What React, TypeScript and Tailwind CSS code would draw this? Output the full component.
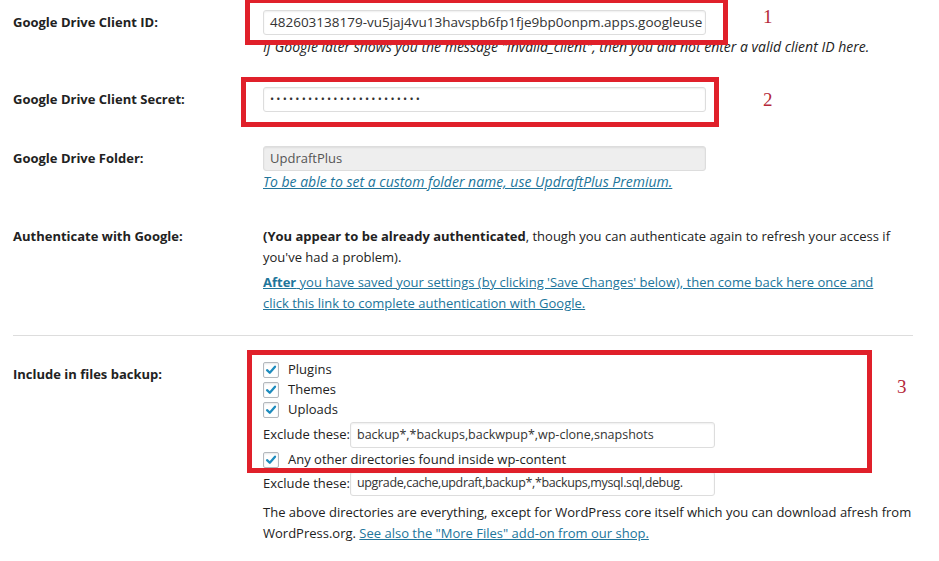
import React from "react";

const font = { fontFamily: '"Open Sans", "Liberation Sans", sans-serif' };

function Check({ label }: { label: string }) {
  return (
    <label className="flex items-center h-[20px] gap-[9px]">
      <span className="w-[16px] h-[16px] border border-[#b4b9be] rounded-[2px] bg-white shadow-[inset_0_1px_2px_rgba(0,0,0,0.1)] flex items-center justify-center">
        <svg viewBox="0 0 16 16" className="w-[14px] h-[14px]">
          <path d="M3.5 8.2 L6.6 11.2 L12.6 4.2" fill="none" stroke="#1e8cbe" strokeWidth="2.6" strokeLinecap="round" strokeLinejoin="round" />
        </svg>
      </span>
      <span>{label}</span>
    </label>
  );
}

function TextInput({ value, disabled, className }: { value: string; disabled?: boolean; className?: string }) {
  return (
    <div
      className={
        "border border-[#ddd] rounded-[3px] shadow-[inset_0_1px_2px_rgba(0,0,0,0.07)] px-[6px] flex items-center overflow-hidden whitespace-nowrap text-[#333] " +
        (disabled ? "bg-[#eeeeee] " : "bg-white ") +
        (className || "")
      }
    >
      {value}
    </div>
  );
}

export default function App() {
  return (
    <div className="relative w-[939px] h-[561px] bg-white text-[13px] text-[#222] overflow-hidden" style={font}>
      <div className="pl-[13px]">
        {/* Client ID */}
        <div className="flex mt-[10px]">
          <div className="w-[250px] h-[25px] flex items-center font-bold">Google Drive Client ID:</div>
          <div>
            <TextInput value="482603138179-vu5jaj4vu13havspb6fp1fje9bp0onpm.apps.googleuse" className="w-[443px] h-[25px] text-[13.5px]" />
            <p className="mt-[3px] leading-[18px] italic text-[14px] whitespace-nowrap">
              If Google later shows you the message "invalid_client", then you did not enter a valid client ID here.
            </p>
          </div>
        </div>

        {/* Client Secret */}
        <div className="flex mt-[31px]">
          <div className="w-[250px] h-[25px] flex items-center font-bold">Google Drive Client Secret:</div>
          <TextInput value="••••••••••••••••••••••••" className="w-[443px] h-[25px] tracking-[2.2px] text-[11px]" />
        </div>

        {/* Folder */}
        <div className="flex mt-[34px]">
          <div className="w-[250px] h-[25px] flex items-center font-bold">Google Drive Folder:</div>
          <div>
            <TextInput value="UpdraftPlus" disabled className="w-[443px] h-[25px] text-[#555]" />
            <a className="block leading-[22px] italic text-[14px] text-[#21759b] underline">
              To be able to set a custom folder name, use UpdraftPlus Premium.
            </a>
          </div>
        </div>

        {/* Authenticate */}
        <div className="flex mt-[33px] leading-[21px]">
          <div className="w-[250px] font-bold">Authenticate with Google:</div>
          <div className="w-[634px]">
            <p>
              <b>(You appear to be already authenticated</b>, though you can authenticate again to refresh your access if you've had a problem).
            </p>
            <p className="mt-[4px]">
              <a className="text-[#21759b] underline">
                <b>After</b> you have saved your settings (by clicking 'Save Changes' below), then come back here once and click this link to complete authentication with Google.
              </a>
            </p>
          </div>
        </div>

        <div className="mt-[21px] w-[900px] h-px bg-[#dddddd]" />

        {/* Files backup */}
        <div className="flex mt-[24px]">
          <div className="w-[250px] pt-[4px] leading-[20px] font-bold">Include in files backup:</div>
          <div>
            <Check label="Plugins" />
            <Check label="Themes" />
            <Check label="Uploads" />
            <div className="flex items-center mt-[2px]">
              <span className="w-[87px]">Exclude these:</span>
              <TextInput value="backup*,*backups,backwpup*,wp-clone,snapshots" className="w-[365px] h-[26px] text-[12.5px]" />
            </div>
            <div className="mt-[2px]">
              <Check label="Any other directories found inside wp-content" />
            </div>
            <div className="flex items-center mt-[1px]">
              <span className="w-[87px]">Exclude these:</span>
              <TextInput value="upgrade,cache,updraft,backup*,*backups,mysql.sql,debug." className="w-[365px] h-[25px] text-[12.5px] tracking-[-0.35px]" />
            </div>
            <p className="mt-[6px] leading-[21px] w-[660px]">
              The above directories are everything, except for WordPress core itself which you can download afresh from WordPress.org.{" "}
              <a className="text-[#21759b] underline">See also the "More Files" add-on from our shop.</a>
            </p>
          </div>
        </div>
      </div>

      {/* annotation boxes */}
      <div className="absolute left-[245px] top-[-2px] w-[483px] h-[47px] border-[5px] border-[#e0202a]" />
      <div className="absolute left-[241px] top-[77px] w-[478px] h-[50px] border-[5px] border-[#e0202a]" />
      <div className="absolute left-[247px] top-[350px] w-[625px] h-[123px] border-[5px] border-[#e0202a]" />
      <span className="absolute left-[763px] top-[3px] text-[19px] text-[#b5283a]" style={{ fontFamily: '"Liberation Serif", serif' }}>1</span>
      <span className="absolute left-[763px] top-[86px] text-[19px] text-[#b5283a]" style={{ fontFamily: '"Liberation Serif", serif' }}>2</span>
      <span className="absolute left-[897px] top-[373px] text-[19px] text-[#b5283a]" style={{ fontFamily: '"Liberation Serif", serif' }}>3</span>
    </div>
  );
}
